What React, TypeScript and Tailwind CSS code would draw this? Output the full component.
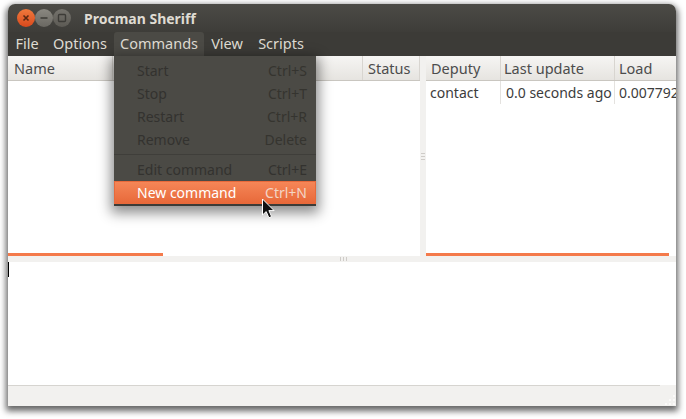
const font = { fontFamily: '"Noto Sans", "DejaVu Sans", sans-serif' };

const leftColumns = [
  { label: "Name", width: "w-[104px]" },
  { label: "", width: "w-[127px]" },
  { label: "", width: "w-[123px]" },
  { label: "Status", width: "flex-1" },
];

const menuBar = [
  { label: "File", width: "w-[38px]", active: false },
  { label: "Options", width: "w-[68px]", active: false },
  { label: "Commands", width: "w-[90px]", active: true },
  { label: "View", width: "w-[46px]", active: false },
  { label: "Scripts", width: "w-[62px]", active: false },
];

const menuItems = [
  { label: "Start", shortcut: "Ctrl+S" },
  { label: "Stop", shortcut: "Ctrl+T" },
  { label: "Restart", shortcut: "Ctrl+R" },
  { label: "Remove", shortcut: "Delete" },
];

function WindowButton({ kind }: { kind: "close" | "min" | "max" }) {
  const isClose = kind === "close";
  return (
    <div
      className={`w-[18px] h-[18px] rounded-full flex items-center justify-center ${
        isClose
          ? "bg-gradient-to-b from-[#f0793c] to-[#d8481c]"
          : kind === "min"
            ? "bg-gradient-to-b from-[#8a8881] to-[#6a6862]"
            : "bg-gradient-to-b from-[#75736d] to-[#5c5a54]"
      }`}
    >
      <svg width="10" height="10" viewBox="0 0 10 10">
        {kind === "close" && <path d="M2.5 2.5l5 5M7.5 2.5l-5 5" stroke="#5a2812" strokeWidth="1.6" />}
        {kind === "min" && <path d="M1.5 5h7" stroke="#3c3b37" strokeWidth="1.6" />}
        {kind === "max" && <rect x="1.5" y="1.5" width="7" height="7" rx="1" fill="none" stroke="#3c3b37" strokeWidth="1.4" />}
      </svg>
    </div>
  );
}

function HeaderCell({ label, className }: { label: string; className: string }) {
  return (
    <div className={`h-full px-[5px] pt-[2px] flex items-center border-r border-[#d8d5d0] text-[14.5px] text-[#4c4c4c] ${className}`}>
      {label}
    </div>
  );
}

export default function App() {
  return (
    <div className="relative w-[686px] h-[419px] bg-white overflow-hidden pl-[8px] pt-[4px]" style={font}>
      {/* Window */}
      <div className="w-[668px] h-[402px] flex flex-col bg-[#f2f1ef] rounded-t-[7px] shadow-[0_3px_6px_2px_rgba(0,0,0,0.6)] overflow-hidden">
        <div className="h-[28px] shrink-0 bg-gradient-to-b from-[#4c4b46] to-[#3e3d39] flex items-center pl-[9px]">
          <div className="flex items-center">
            <WindowButton kind="close" />
            <WindowButton kind="min" />
            <WindowButton kind="max" />
          </div>
          <span className="ml-[13px] text-[14px] font-bold text-[#dfdbd2]">Procman Sheriff</span>
        </div>

        <div className="h-[24px] shrink-0 bg-[#3c3b37] flex items-center text-[14.5px] text-[#dfdbd2]">
          {menuBar.map((item) => (
            <span
              key={item.label}
              className={`h-full flex items-center justify-center ${item.width} ${
                item.active ? "bg-[#4b4a45] rounded-t-[3px]" : ""
              }`}
            >
              {item.label}
            </span>
          ))}
        </div>

        <div className="h-[200px] shrink-0 flex">
          <div className="w-[412px] flex flex-col bg-white">
            <div className="h-[25px] flex bg-gradient-to-b from-[#f6f5f3] to-[#e6e4e0] border-b border-[#c9c6c0] pl-[1px]">
              {leftColumns.map((col, i) => (
                <HeaderCell key={i} label={col.label} className={col.width} />
              ))}
            </div>
            <div className="flex-1"></div>
            <div className="h-[3px] w-[155px] bg-[#f47a4b]"></div>
          </div>

          <div className="w-[6px] flex flex-col items-center justify-center gap-[2px]">
            <div className="w-[4px] h-[1px] bg-[#cfccc8]"></div>
            <div className="w-[4px] h-[1px] bg-[#cfccc8]"></div>
            <div className="w-[4px] h-[1px] bg-[#cfccc8]"></div>
          </div>

          <div className="flex-1 min-w-0 flex flex-col bg-white overflow-hidden">
            <div className="h-[25px] flex bg-gradient-to-b from-[#f6f5f3] to-[#e6e4e0] border-b border-[#c9c6c0]">
              <HeaderCell label="Deputy" className="w-[75px]" />
              <HeaderCell label="Last update" className="w-[114px] !px-[3px]" />
              <HeaderCell label="Load" className="flex-1 border-r-0 !px-[4px]" />
            </div>
            <div className="h-[23px] flex text-[14px] text-[#3c3c3c] whitespace-nowrap overflow-hidden">
              <div className="w-[75px] shrink-0 pl-[4px] flex items-center border-r border-[#e4e2df]">contact</div>
              <div className="w-[114px] shrink-0 pl-[5px] flex items-center border-r border-[#e4e2df]">0.0 seconds ago</div>
              <div className="shrink-0 pl-[4px] flex items-center">0.007792</div>
            </div>
            <div className="flex-1"></div>
            <div className="h-[3px] w-[243px] bg-[#f47a4b]"></div>
          </div>
        </div>

        <div className="h-[6px] shrink-0 flex items-center justify-center gap-[2px] pl-[2px]">
          <div className="w-[1px] h-[4px] bg-[#cfccc8]"></div>
          <div className="w-[1px] h-[4px] bg-[#cfccc8]"></div>
          <div className="w-[1px] h-[4px] bg-[#cfccc8]"></div>
        </div>

        <div className="h-[123px] shrink-0 bg-white">
          <div className="w-[1px] h-[15px] bg-black"></div>
        </div>

        <div className="flex-1 flex flex-col bg-[#f2f1ef]">
          <div className="h-[1px] w-[652px] bg-[#d6d4d0]"></div>
          <div className="flex-1 flex justify-end items-end">
            <svg width="12" height="12" viewBox="0 0 12 12" fill="#fbfaf9">
              <rect x="9" y="1" width="2" height="2" />
              <rect x="9" y="5" width="2" height="2" />
              <rect x="5" y="5" width="2" height="2" />
              <rect x="9" y="9" width="2" height="2" />
              <rect x="5" y="9" width="2" height="2" />
              <rect x="1" y="9" width="2" height="2" />
            </svg>
          </div>
        </div>
      </div>

      {/* Commands menu */}
      <div className="absolute left-[114px] top-[56px] w-[202px] h-[150px] bg-[#4b4a45] shadow-[0_4px_12px_3px_rgba(0,0,0,0.45)] text-[14px] pt-[3px]">
        {menuItems.map((item) => (
          <div key={item.label} className="h-[23px] flex items-center justify-between pl-[23px] pr-[9px] text-[#33322f]">
            <span>{item.label}</span>
            <span className="text-[#35342f]">{item.shortcut}</span>
          </div>
        ))}
        <div className="h-[1px] mt-[3px] mb-[3px] bg-[#3f3e3a]"></div>
        <div className="h-[23px] flex items-center justify-between pl-[23px] pr-[9px] text-[#33322f]">
          <span>Edit command</span>
          <span>Ctrl+E</span>
        </div>
        <div className="h-[23px] flex items-center justify-between pl-[22px] pr-[8px] bg-gradient-to-b from-[#f58657] to-[#e8693a] border border-[#e8693a] text-white">
          <span>New command</span>
          <span className="text-[#f3d5c6]">Ctrl+N</span>
        </div>
        <div className="h-[2px] bg-[#3c3b37]"></div>
      </div>

      {/* Mouse cursor */}
      <svg className="absolute left-[261px] top-[198px]" width="16" height="21" viewBox="0 0 16 21">
        <path d="M1.5 1v16l3.7-3.4 2.7 6.2 2.7-1.2-2.7-6h5.2z" fill="#111" stroke="#fff" strokeWidth="1" />
      </svg>
    </div>
  );
}
